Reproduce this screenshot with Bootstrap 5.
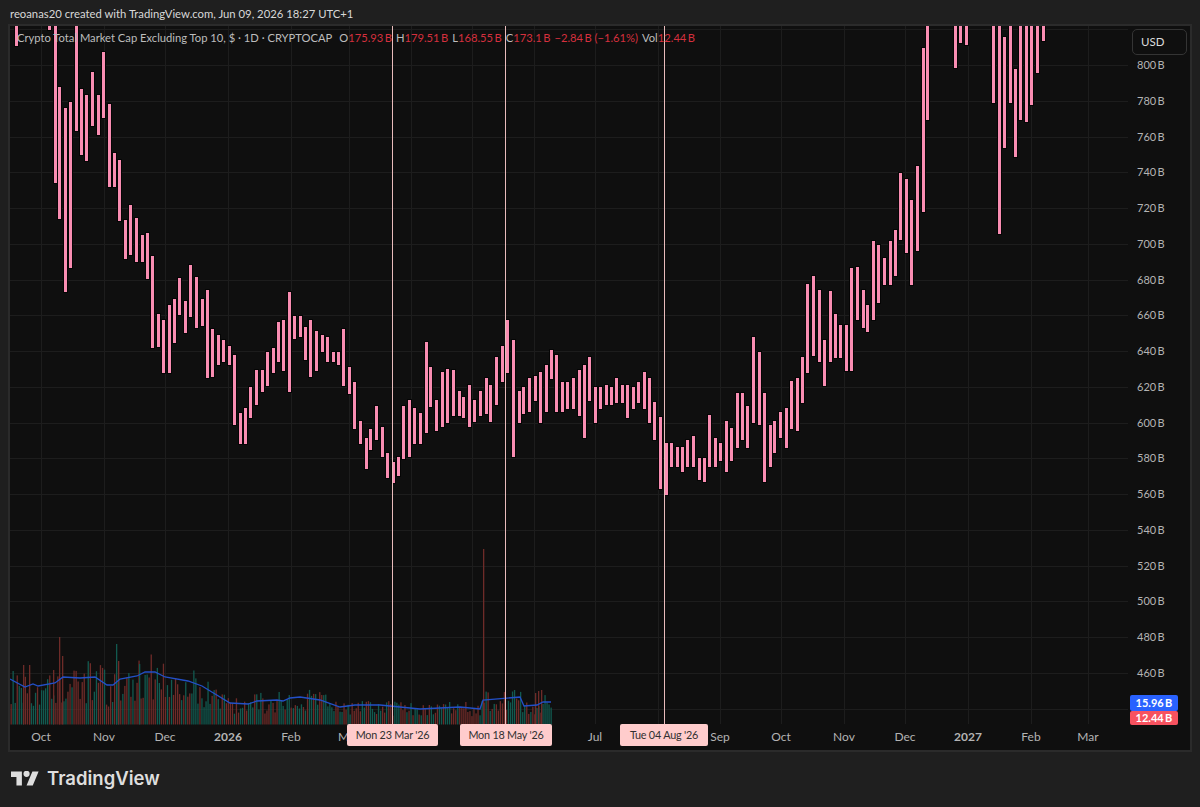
<!DOCTYPE html>
<html lang="en">

<head>
    <meta charset="UTF-8" />
    <meta name="viewport" content="width=device-width, initial-scale=1" />
    <title>Crypto Total Market Cap Excluding Top 10</title>
    <link href="https://cdn.jsdelivr.net/npm/bootstrap@5.3.0/dist/css/bootstrap.min.css" rel="stylesheet" />
    <style>
        body {
            background-color: #1f1f1f;
            height: 807px;
            overflow: hidden;
            font-family: Lato, "Liberation Sans", sans-serif;
        }

        .snap-header {
            height: 24px;
            padding: 6px 0 0 10px;
            color: #d8d8d8;
            font-size: 11.3px;
            line-height: 15px;
        }

        .chart-panel {
            margin: 0 8px;
            height: 728px;
            border: 2px solid #2b2b2b;
            background-color: #0f0f0f;
        }

        .chart-panel svg {
            display: block;
        }

        .axis-text {
            font-family: Lato, "Liberation Sans", sans-serif;
            font-size: 12px;
            fill: #b4b4b4;
        }

        .axis-text.price {
            font-size: 11px;
        }

        .legend {
            left: 7px;
            top: 4px;
            gap: 4px;
            font-size: 11.2px;
            line-height: 16px;
            color: #bdbdbd;
            white-space: nowrap;
        }

        .legend .title {
            margin-right: 3px;
        }

        .legend .val {
            color: #d5303e;
        }

        .usd-btn {
            right: 3px;
            top: 3px;
            width: 55px;
            height: 26px;
            padding: 3px 0 0 8px;
            border: 1px solid #343434;
            border-radius: 5px;
            color: #dcdcdc;
            font-size: 11.5px;
            text-align: left;
        }

        .date-tag {
            top: 698px;
            height: 22px;
            padding-top: 3px;
            background-color: #ffcccc;
            border-radius: 2px;
            color: #303030;
            font-size: 10.8px;
            letter-spacing: -0.2px;
            text-align: center;
        }

        .price-tag {
            left: 1120px;
            width: 48px;
            color: #fff;
            font-size: 11px;
            font-weight: 700;
            text-align: center;
            border-radius: 2px;
            line-height: 14px;
        }

        .tag-ma {
            top: 669px;
            height: 16px;
            padding-top: 1px;
            background-color: #2962ff;
        }

        .tag-vol {
            top: 685px;
            height: 14px;
            background-color: #f7525f;
        }

        .brand {
            padding: 16px 0 0 11px;
            color: #dedede;
        }

        .brand span {
            font-family: Inter, "Liberation Sans", sans-serif;
            font-size: 18.5px;
            font-weight: 600;
            line-height: 20px;
        }
    </style>
</head>

<body>
    <div class="snap-header">reoanas20 created with TradingView.com, Jun 09, 2026 18:27 UTC+1</div>

    <div class="chart-panel position-relative">
        <svg id="chart" width="1180" height="724" viewBox="10 26 1180 724"></svg>

        <!-- legend and scale controls lying over the plot -->
        <div class="legend position-absolute d-flex">
            <span class="title">Crypto Total Market Cap Excluding Top 10, $ · 1D · CRYPTOCAP</span>
            <span>O<span class="val">175.93&thinsp;B</span></span>
            <span>H<span class="val">179.51&thinsp;B</span></span>
            <span>L<span class="val">168.55&thinsp;B</span></span>
            <span>C<span class="val">173.1&thinsp;B</span></span>
            <span class="val">−2.84&thinsp;B (−1.61%)</span>
            <span>Vol<span class="val">12.44&thinsp;B</span></span>
        </div>
        <div class="usd-btn position-absolute">USD</div>
        <div id="dateTags"></div>
        <div class="price-tag tag-ma position-absolute">15.96&thinsp;B</div>
        <div class="price-tag tag-vol position-absolute">12.44&thinsp;B</div>
    </div>

    <div class="brand d-flex align-items-center gap-2">
        <svg width="28" height="15" viewBox="0 4 36 18" fill="#dedede">
            <path d="M14 22H7V11H0V4h14v18zM28 22h-8l7.5-18h8L28 22z"></path>
            <circle cx="20" cy="7" r="4"></circle>
        </svg>
        <span>TradingView</span>
    </div>

    <script src="https://cdn.jsdelivr.net/npm/bootstrap@5.3.0/dist/js/bootstrap.bundle.min.js"></script>
    <script>
        // Bars read off the chart: [x centre, top y, bottom y]
        const bars = [
            [16.5, 25, 46], [49.3, 25, 30], [55, 25, 183], [59.5, 87, 219], [65.5, 108, 292], [70.7, 102, 268],
            [76.3, 25, 131], [81.7, 89, 155], [86.7, 95, 161], [92.3, 72, 126], [98, 95, 135], [103.3, 52, 118],
            [109, 104, 187], [114.7, 153, 187], [119.3, 160, 221], [125, 220, 259], [130.7, 205, 255], [136.3, 218, 262],
            [142, 235, 262], [147.3, 233, 279], [152.3, 256, 348], [158, 314, 347], [163.7, 320, 373], [169.3, 305, 373],
            [174.7, 299, 343], [179.7, 278, 315], [185.3, 301, 333], [190.7, 265, 317], [196.3, 277, 328], [202, 299, 326],
            [207.7, 290, 378], [212.3, 329, 377], [218, 335, 365], [223.7, 340, 362], [229.3, 346, 365], [234.7, 355, 425],
            [240.3, 413, 444], [245.3, 408, 444], [250.7, 387, 418], [256.3, 370, 405], [262, 370, 392], [267.3, 352, 386],
            [273.3, 348, 373], [278, 322, 362], [283.7, 320, 371], [289, 292, 392], [294.7, 316, 339], [300.3, 316, 337],
            [305, 327, 360], [310.7, 320, 377], [316.3, 331, 371], [322, 335, 352], [327.7, 337, 362], [333.3, 352, 362],
            [338, 352, 365], [343.7, 329, 386], [349.3, 367, 394], [354.7, 382, 429], [360.3, 421, 444], [366, 438, 469],
            [370.7, 429, 450], [376.3, 406, 440], [382, 427, 457], [387.7, 453, 478], [393.3, 462, 483], [398.3, 457, 476],
            [403.3, 406, 459], [409.3, 400, 457], [414.7, 408, 444], [420.3, 413, 444], [426, 342, 433], [430.7, 367, 407],
            [436.3, 400, 431], [442, 372, 427], [447.7, 369, 423], [453.3, 370, 416], [459, 391, 416], [463.7, 397, 418],
            [469.3, 385, 427], [474.7, 400, 422], [480.3, 391, 416], [486, 378, 414], [490.7, 385, 422], [496.3, 357, 405],
            [502, 346, 382], [507.3, 320, 373], [513.3, 340, 457], [519, 391, 423], [523.7, 387, 414], [529.3, 378, 412],
            [535, 376, 401], [540.3, 372, 423], [546, 365, 412], [551.7, 350, 379], [556.3, 355, 412], [562, 382, 412],
            [567.7, 382, 409], [573.3, 378, 409], [579, 370, 416], [584.7, 365, 438], [589.3, 357, 401], [595, 387, 423],
            [600.7, 387, 409], [606, 385, 405], [611.7, 387, 405], [616.7, 378, 403], [622, 385, 403], [627.7, 385, 418],
            [633.3, 387, 409], [638.7, 382, 403], [644.3, 372, 409], [649.3, 378, 423], [654.7, 402, 440], [660.3, 417, 489],
            [666, 443, 495], [671.7, 443, 467], [677.3, 447, 467], [682, 447, 472], [687.7, 440, 467], [693.3, 436, 467],
            [699, 458, 480], [704.3, 458, 482], [709.3, 415, 467], [715, 438, 467], [720.3, 443, 461], [726, 421, 472],
            [731.7, 428, 461], [737.3, 393, 448], [742, 393, 440], [747.7, 406, 448], [753.3, 337, 423], [759, 352, 425],
            [764.7, 393, 482], [770, 425, 467], [774.7, 421, 453], [780.3, 412, 438], [786, 408, 448], [791.7, 381, 429],
            [797.3, 378, 431], [802, 357, 403], [807.7, 284, 373], [813.3, 276, 356], [819, 290, 362], [824.3, 340, 386],
            [830, 291, 362], [835, 314, 358], [840.7, 325, 358], [846.3, 325, 371], [851.7, 268, 371], [857.3, 267, 320],
            [863, 290, 328], [867.7, 305, 332], [873.3, 241, 320], [878.7, 245, 303], [884.7, 258, 285], [890, 241, 285],
            [895.7, 230, 276], [900.7, 173, 240], [906.3, 179, 253], [911.7, 200, 285], [917.3, 166, 251], [923, 48, 212],
            [927.7, 25, 120], [955.7, 25, 68], [960.7, 25, 43], [966, 25, 45], [993.3, 25, 103], [999, 25, 234],
            [1004.7, 37, 148], [1010, 25, 103], [1015.7, 69, 157], [1020.7, 25, 120], [1026, 25, 122], [1031.7, 25, 105],
            [1037.3, 25, 73], [1043, 25, 41]
        ];

        // Volume moving average line
        const maLine = [
            [10, 679], [25, 687], [33, 684], [38, 686], [55, 683], [63, 677], [80, 678], [95, 677], [107, 685], [113, 685],
            [120, 679], [137, 676], [145, 672], [155, 672], [165, 677], [188, 681], [202, 686], [230, 703], [248, 704],
            [257, 701], [277, 700], [283, 701], [290, 698], [300, 697], [320, 700], [340, 707], [355, 705], [380, 705],
            [400, 707], [420, 709], [440, 708], [460, 707], [480, 709], [483, 700], [520, 697], [524, 706], [537, 705],
            [543, 702], [551, 702]
        ];

        const priceLabels = [800, 780, 760, 740, 720, 700, 680, 660, 640, 620, 600, 580, 560, 540, 520, 500, 480, 460];
        const gridX = [41, 104, 165, 228, 291, 349, 411, 472, 534, 595, 658, 720, 781, 844, 905, 968, 1031, 1088];
        const timeLabels = [
            [41, "Oct"], [104, "Nov"], [165, "Dec"], [228, "2026", 1], [291, "Feb"], [595, "Jul"], [720, "Sep"],
            [781, "Oct"], [844, "Nov"], [905, "Dec"], [968, "2027", 1], [1031, "Feb"], [1088, "Mar"]
        ];
        const marks = [
            { x: 392.5, left: 347, width: 91, label: "Mon 23 Mar '26" },
            { x: 505.5, left: 460, width: 92, label: "Mon 18 May '26" },
            { x: 664.5, left: 620, width: 88, label: "Tue 04 Aug '26" }
        ];
        // A few volume spikes that stand out: [x, top y, colour]
        const spikes = [
            [59, 637, "r"], [62, 656, "r"], [23, 665, "r"], [29, 665, "r"], [53, 670, "r"], [116, 644, "t"], [118, 661, "r"],
            [139, 664, "t"], [483, 549, "r"], [535, 693, "r"], [538, 691, "r"], [541, 690, "r"]
        ];

        function maAt(x) {
            for (let i = 1; i < maLine.length; i++) {
                if (x <= maLine[i][0]) {
                    const a = maLine[i - 1], b = maLine[i];
                    return a[1] + (b[1] - a[1]) * (x - a[0]) / (b[0] - a[0]);
                }
            }
            return maLine[maLine.length - 1][1];
        }

        let seed = 17;
        function rnd() {
            seed = (seed * 16807) % 2147483647;
            return seed / 2147483647;
        }

        let svg = "";

        // Grid
        for (let i = -1; i < 19; i++) {
            const y = Math.round(65 + i * 35.76) + 0.5;
            svg += `<line x1="10" x2="1128" y1="${y}" y2="${y}" stroke="#1d1d1d"/>`;
        }
        gridX.forEach(x => {
            svg += `<line x1="${x + 0.5}" x2="${x + 0.5}" y1="26" y2="724" stroke="#1d1d1d"/>`;
        });

        // Volume
        const volColor = { r: "#6e2b28", t: "#125a50" };
        for (let x = 10.5; x < 552; x += 2.03) {
            const ma = maAt(x);
            const h = Math.max(4, (724.5 - ma) * (0.45 + rnd() * 0.9));
            const c = rnd() < 0.55 ? "r" : "t";
            svg += `<rect x="${x.toFixed(1)}" y="${(724.5 - h).toFixed(1)}" width="1.3" height="${h.toFixed(1)}" fill="${volColor[c]}"/>`;
        }
        spikes.forEach(([x, top, c]) => {
            svg += `<rect x="${x}" y="${top}" width="1.3" height="${724.5 - top}" fill="${volColor[c]}"/>`;
        });
        svg += `<polyline points="${maLine.map(p => p.join(",")).join(" ")}" fill="none" stroke="#2350c8" stroke-width="1.3"/>`;

        // Price bars
        bars.forEach(([x, top, bottom]) => {
            const left = Math.round(x - 1.5);
            const t = Math.max(top, 26);
            svg += `<rect x="${left - 0.5}" y="${t - 0.5}" width="4" height="${bottom - t + 1}" fill="#f98db2" stroke="#050505" stroke-width="1"/>`;
        });

        // Vertical markers
        marks.forEach(m => {
            svg += `<line x1="${m.x}" x2="${m.x}" y1="26" y2="724" stroke="#e9bcbc" stroke-width="1"/>`;
        });

        // Axis text
        priceLabels.forEach((p, i) => {
            const y = 65 + i * 35.76 + 4;
            svg += `<text class="axis-text price" x="1137" y="${y.toFixed(1)}">${p}\u2009B</text>`;
        });
        timeLabels.forEach(([x, t, bold]) => {
            svg += `<text class="axis-text" x="${x}" y="741" text-anchor="middle"${bold ? ' font-weight="700"' : ""}>${t}</text>`;
        });
        // March is cut by the first date tag, only its M shows
        svg += `<text class="axis-text" x="338" y="741">M</text>`;
        document.getElementById("chart").innerHTML = svg;

        // Date tags on the time scale
        document.getElementById("dateTags").innerHTML = marks.map(m =>
            `<div class="date-tag position-absolute" style="left:${m.left - 10}px;width:${m.width}px">${m.label}</div>`
        ).join("");
    </script>
</body>

</html>
